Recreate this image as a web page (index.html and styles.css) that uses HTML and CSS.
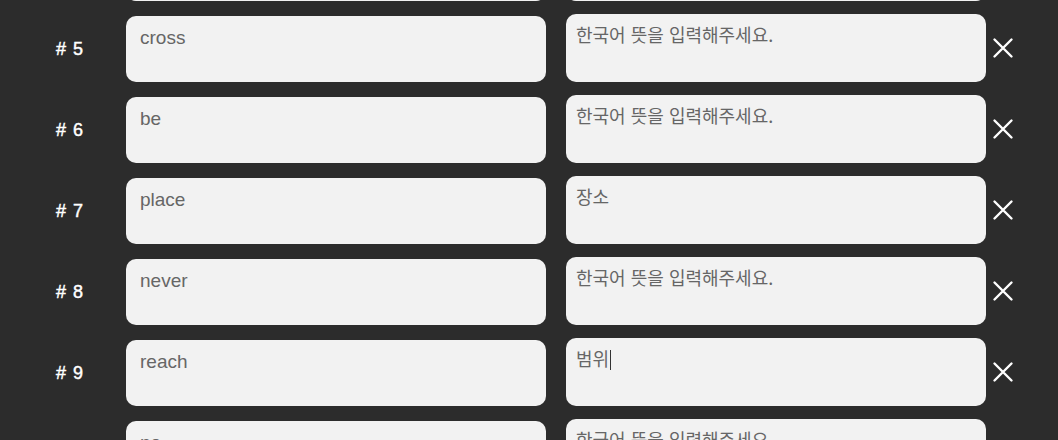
FILE: index.html
```html
<!DOCTYPE html>
<html lang="ko">
<head>
<meta charset="utf-8">
<title>단어 목록</title>
<link rel="stylesheet" href="styles.css">
</head>
<body>
<div class="list">
  <div class="row">
    <div class="num"># 4</div>
    <div class="word">word</div>
    <div class="meaning placeholder">한국어 뜻을 입력해주세요.</div>
    <button class="remove" aria-label="삭제"><svg viewBox="0 0 22 22" width="22" height="22"><path d="M2.5 2.5 L19.5 19.5 M19.5 2.5 L2.5 19.5" stroke="#fff" stroke-width="2.4" stroke-linecap="round" fill="none"/></svg></button>
  </div>
  <div class="row">
    <div class="num"># 5</div>
    <div class="word">cross</div>
    <div class="meaning placeholder">한국어 뜻을 입력해주세요.</div>
    <button class="remove" aria-label="삭제"><svg viewBox="0 0 22 22" width="22" height="22"><path d="M2.5 2.5 L19.5 19.5 M19.5 2.5 L2.5 19.5" stroke="#fff" stroke-width="2.4" stroke-linecap="round" fill="none"/></svg></button>
  </div>
  <div class="row">
    <div class="num"># 6</div>
    <div class="word">be</div>
    <div class="meaning placeholder">한국어 뜻을 입력해주세요.</div>
    <button class="remove" aria-label="삭제"><svg viewBox="0 0 22 22" width="22" height="22"><path d="M2.5 2.5 L19.5 19.5 M19.5 2.5 L2.5 19.5" stroke="#fff" stroke-width="2.4" stroke-linecap="round" fill="none"/></svg></button>
  </div>
  <div class="row">
    <div class="num"># 7</div>
    <div class="word">place</div>
    <div class="meaning">장소</div>
    <button class="remove" aria-label="삭제"><svg viewBox="0 0 22 22" width="22" height="22"><path d="M2.5 2.5 L19.5 19.5 M19.5 2.5 L2.5 19.5" stroke="#fff" stroke-width="2.4" stroke-linecap="round" fill="none"/></svg></button>
  </div>
  <div class="row">
    <div class="num"># 8</div>
    <div class="word">never</div>
    <div class="meaning placeholder">한국어 뜻을 입력해주세요.</div>
    <button class="remove" aria-label="삭제"><svg viewBox="0 0 22 22" width="22" height="22"><path d="M2.5 2.5 L19.5 19.5 M19.5 2.5 L2.5 19.5" stroke="#fff" stroke-width="2.4" stroke-linecap="round" fill="none"/></svg></button>
  </div>
  <div class="row">
    <div class="num"># 9</div>
    <div class="word">reach</div>
    <div class="meaning">범위<span class="caret"></span></div>
    <button class="remove" aria-label="삭제"><svg viewBox="0 0 22 22" width="22" height="22"><path d="M2.5 2.5 L19.5 19.5 M19.5 2.5 L2.5 19.5" stroke="#fff" stroke-width="2.4" stroke-linecap="round" fill="none"/></svg></button>
  </div>
  <div class="row">
    <div class="num"># 10</div>
    <div class="word">no</div>
    <div class="meaning placeholder">한국어 뜻을 입력해주세요.</div>
    <button class="remove" aria-label="삭제"><svg viewBox="0 0 22 22" width="22" height="22"><path d="M2.5 2.5 L19.5 19.5 M19.5 2.5 L2.5 19.5" stroke="#fff" stroke-width="2.4" stroke-linecap="round" fill="none"/></svg></button>
  </div>
</div>
</body>
</html>
```
FILE: styles.css
```css
html, body {
  margin: 0;
  padding: 0;
  background: #2c2c2c;
  overflow: hidden;
}
body {
  width: 1058px;
  height: 440px;
  font-family: "Liberation Sans", Arial, sans-serif;
}
.list {
  display: flex;
  flex-direction: column;
  gap: 13px;
  margin-top: -67px;
}
.row {
  display: flex;
  align-items: center;
  height: 68px;
  padding-left: 56px;
}
.num {
  width: 70px;
  padding-top: 3px;
  color: #fff;
  font-size: 18px;
  font-weight: normal;
  word-spacing: 2px;
  -webkit-text-stroke: 0.45px #fff;
  font-family: "Liberation Sans", Arial, sans-serif;
}
.word {
  box-sizing: border-box;
  width: 420px;
  height: 66px;
  margin-top: 2px;
  background: #f2f2f2;
  border-radius: 10px;
  padding: 11px 14px;
  font-size: 19px;
  color: #666;
  font-family: "Liberation Sans", Arial, sans-serif;
}
.meaning {
  box-sizing: border-box;
  width: 420px;
  height: 68px;
  margin-left: 20px;
  background: #f2f2f2;
  border-radius: 10px;
  padding: 7px 10px;
  font-size: 18px;
  color: #666;
  font-family: "Noto Sans CJK KR", "Liberation Sans", sans-serif;
}
.caret {
  display: inline-block;
  width: 1px;
  height: 20px;
  background: #333;
  vertical-align: -4px;
  margin-left: 1px;
}
.remove {
  margin-left: 6px;
  padding: 0;
  width: 22px;
  height: 22px;
  display: flex;
  align-items: center;
  justify-content: center;
  background: none;
  border: 0;
}
```
